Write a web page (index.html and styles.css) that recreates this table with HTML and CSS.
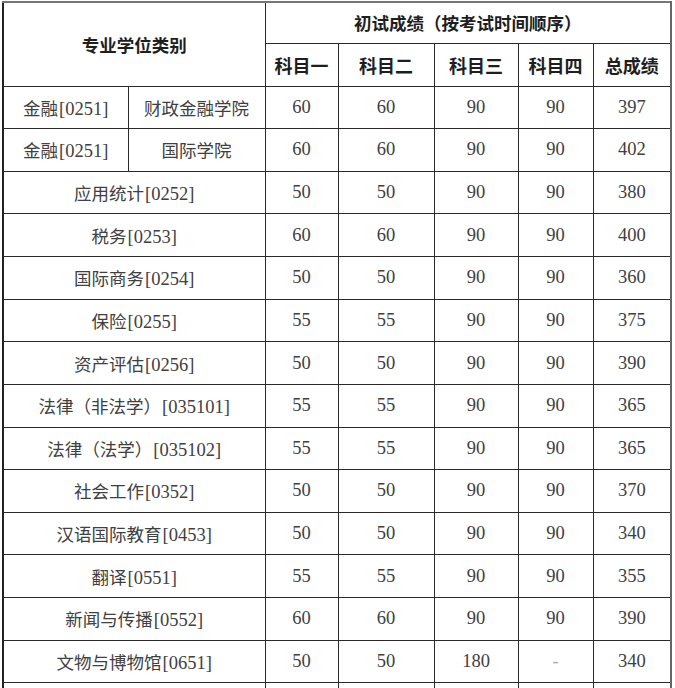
FILE: index.html
```html
<!DOCTYPE html>
<html lang="zh">
<head>
<meta charset="utf-8">
<title>初试成绩</title>
<link rel="stylesheet" href="styles.css">
</head>
<body>
<div class="wrap">
<table class="scores">
  <colgroup>
    <col class="c-a"><col class="c-b"><col class="c-c"><col class="c-d"><col class="c-e"><col class="c-f"><col class="c-g">
  </colgroup>
  <thead>
    <tr class="h1">
      <th colspan="2" rowspan="2" class="major-head">专业学位类别</th>
      <th colspan="5">初试成绩（按考试时间顺序）</th>
    </tr>
    <tr class="h2">
      <th>科目一</th><th>科目二</th><th>科目三</th><th>科目四</th><th>总成绩</th>
    </tr>
  </thead>
  <tbody>
    <tr><td>金融<span class="code">[0251]</span></td><td>财政金融学院</td><td class="num">60</td><td class="num">60</td><td class="num">90</td><td class="num">90</td><td class="num">397</td></tr>
    <tr><td>金融<span class="code">[0251]</span></td><td>国际学院</td><td class="num">60</td><td class="num">60</td><td class="num">90</td><td class="num">90</td><td class="num">402</td></tr>
    <tr><td colspan="2">应用统计<span class="code">[0252]</span></td><td class="num">50</td><td class="num">50</td><td class="num">90</td><td class="num">90</td><td class="num">380</td></tr>
    <tr><td colspan="2">税务<span class="code">[0253]</span></td><td class="num">60</td><td class="num">60</td><td class="num">90</td><td class="num">90</td><td class="num">400</td></tr>
    <tr><td colspan="2">国际商务<span class="code">[0254]</span></td><td class="num">50</td><td class="num">50</td><td class="num">90</td><td class="num">90</td><td class="num">360</td></tr>
    <tr><td colspan="2">保险<span class="code">[0255]</span></td><td class="num">55</td><td class="num">55</td><td class="num">90</td><td class="num">90</td><td class="num">375</td></tr>
    <tr><td colspan="2">资产评估<span class="code">[0256]</span></td><td class="num">50</td><td class="num">50</td><td class="num">90</td><td class="num">90</td><td class="num">390</td></tr>
    <tr><td colspan="2">法律（非法学）<span class="code">[035101]</span></td><td class="num">55</td><td class="num">55</td><td class="num">90</td><td class="num">90</td><td class="num">365</td></tr>
    <tr><td colspan="2">法律（法学）<span class="code">[035102]</span></td><td class="num">55</td><td class="num">55</td><td class="num">90</td><td class="num">90</td><td class="num">365</td></tr>
    <tr><td colspan="2">社会工作<span class="code">[0352]</span></td><td class="num">50</td><td class="num">50</td><td class="num">90</td><td class="num">90</td><td class="num">370</td></tr>
    <tr><td colspan="2">汉语国际教育<span class="code">[0453]</span></td><td class="num">50</td><td class="num">50</td><td class="num">90</td><td class="num">90</td><td class="num">340</td></tr>
    <tr><td colspan="2">翻译<span class="code">[0551]</span></td><td class="num">55</td><td class="num">55</td><td class="num">90</td><td class="num">90</td><td class="num">355</td></tr>
    <tr><td colspan="2">新闻与传播<span class="code">[0552]</span></td><td class="num">60</td><td class="num">60</td><td class="num">90</td><td class="num">90</td><td class="num">390</td></tr>
    <tr><td colspan="2">文物与博物馆<span class="code">[0651]</span></td><td class="num">50</td><td class="num">50</td><td class="num">180</td><td class="num dash">-</td><td class="num">340</td></tr>
    <tr class="cut"><td colspan="2"></td><td></td><td></td><td></td><td></td><td></td></tr>
  </tbody>
</table>
</div>
</body>
</html>
```

FILE: styles.css
```css
html, body {
  margin: 0;
  padding: 0;
  background: #ffffff;
  overflow: hidden;
  height: 688px;
}

.wrap {
  padding: 1px 0 0 2px;
}

.scores {
  border-collapse: collapse;
  table-layout: fixed;
  width: 669px;
  border-left: 2px solid #222;
  border-right: 2px solid #666;
  border-top: 2px solid #777;
  font-family: "Noto Sans CJK SC", "Liberation Serif", serif;
  font-size: 17.5px;
  color: #404040;
}

.c-a { width: 125px; }
.c-b { width: 137px; }
.c-c { width: 73px; }
.c-d { width: 96px; }
.c-e { width: 84px; }
.c-f { width: 75px; }
.c-g { width: 78px; }

.scores th,
.scores td {
  border: 1px solid #2a2a2a;
  text-align: center;
  vertical-align: middle;
  padding: 0;
  white-space: nowrap;
}

.scores th {
  font-family: "Noto Sans CJK SC", sans-serif;
  font-weight: 700;
  font-size: 17.5px;
  color: #1e1e1e;
}

.h1 { height: 41px; }
.h2 { height: 43px; }
.h2 th { font-size: 18px; }

.major-head {
  padding-top: 4px;
}

.scores tbody tr {
  height: 42.64px;
}

.code,
.num {
  font-family: "Liberation Serif", serif;
  font-size: 18.5px;
}

.code {
  margin-left: 1px;
}

.num {
  padding-top: 1px;
}

.dash {
  color: #aaa;
}

.cut td {
  border-bottom: none;
}
```
